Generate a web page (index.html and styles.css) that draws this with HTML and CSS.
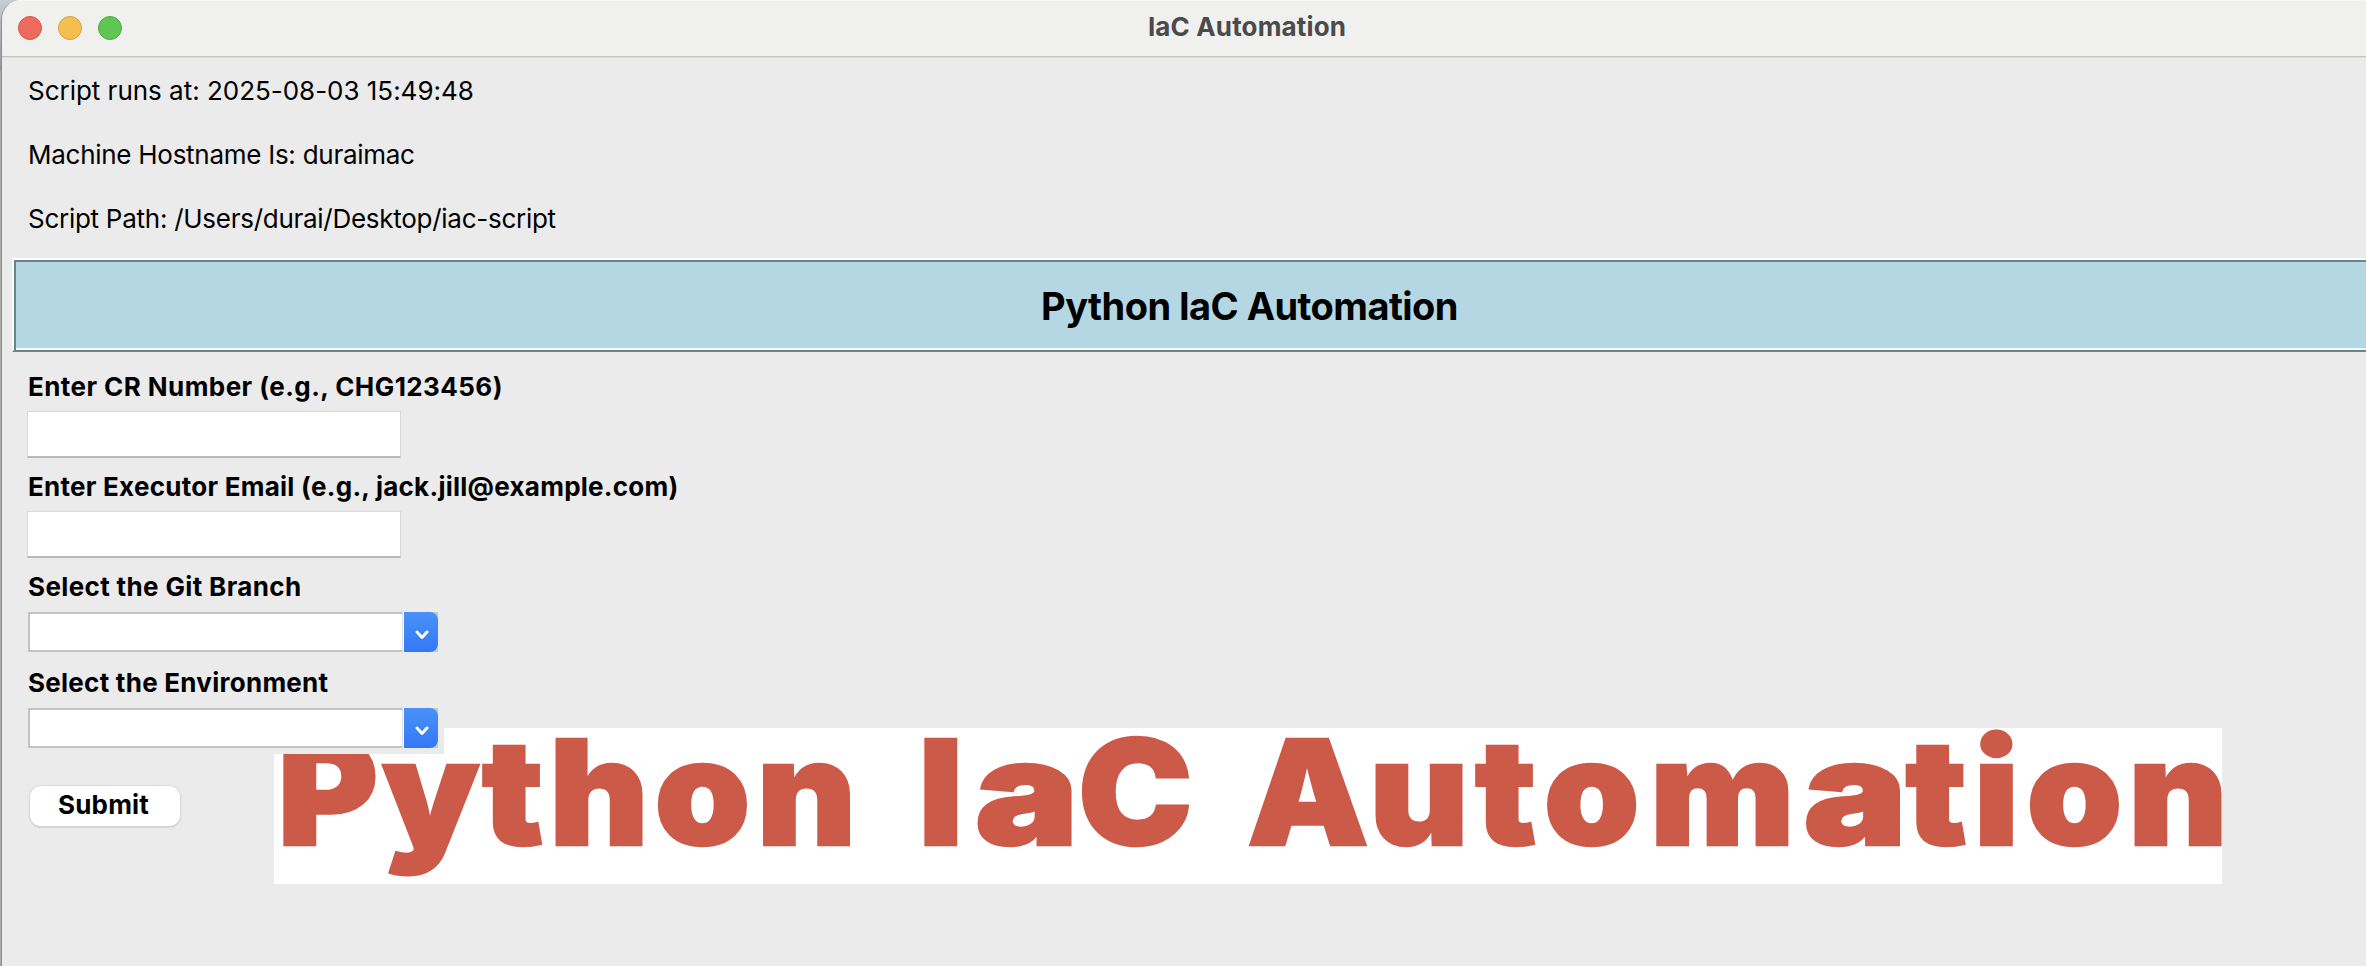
FILE: index.html
```
<!DOCTYPE html>
<html lang="en">
<head>
<meta charset="utf-8">
<title>IaC Automation</title>
<link rel="stylesheet" href="styles.css">
</head>
<body>
<div class="window">
  <header class="titlebar">
    <div class="lights">
      <span class="light close"></span>
      <span class="light minimize"></span>
      <span class="light zoom"></span>
    </div>
    <h1 class="window-title">IaC Automation</h1>
  </header>
  <main class="content">
    <div class="info">
      <p class="info-line first">Script runs at: 2025-08-03 15:49:48</p>
      <p class="info-line">Machine Hostname Is: duraimac</p>
      <p class="info-line">Script Path: /Users/durai/Desktop/iac-script</p>
    </div>
    <div class="banner"><h2 class="banner-title">Python IaC Automation</h2></div>
    <svg class="picture" viewBox="0 0 1948 156" role="img" aria-label="Python IaC Automation">
      <g class="picture-text" transform="scale(1.05 1)">
        <text y="117" x="3.3 102.9 198.1 262.1 362.4 459.7">Python</text>
        <text y="117" x="613.8">I<tspan x="667.3" textLength="99" lengthAdjust="spacingAndGlyphs">a</tspan><tspan x="765.7">C</tspan></text>
        <text y="117" x="926.6 1043.1 1143.8 1209.3 1310.5">Autom<tspan x="1456.4" textLength="99" lengthAdjust="spacingAndGlyphs">a</tspan><tspan x="1553.8 1618.8 1669.1 1765.9">tion</tspan></text>
      </g>
    </svg>
    <form class="form">
      <div class="field">
        <label class="label cr" for="cr">Enter CR Number (e.g., CHG123456)</label>
        <input class="entry" id="cr" type="text">
      </div>
      <div class="field">
        <label class="label email" for="email">Enter Executor Email (e.g., jack.jill@example.com)</label>
        <input class="entry" id="email" type="text">
      </div>
      <div class="field choice">
        <span class="label branch">Select the Git Branch</span>
        <div class="combo">
          <div class="combo-value"></div>
          <div class="combo-end"><div class="combo-arrow"><svg class="chevron" viewBox="0 0 16 12"><path d="M3 3 8 8.5 13 3"/></svg></div></div>
        </div>
      </div>
      <div class="field choice last">
        <span class="label env">Select the Environment</span>
        <div class="combo">
          <div class="combo-value"></div>
          <div class="combo-end"><div class="combo-arrow"><svg class="chevron" viewBox="0 0 16 12"><path d="M3 3 8 8.5 13 3"/></svg></div></div>
        </div>
      </div>
      <button class="submit" type="button">Submit</button>
    </form>
  </main>
</div>
</body>
</html>
```
FILE: styles.css
```
* { box-sizing: border-box; }
body {
  margin: 0;
  height: 966px;
  overflow: hidden;
  padding-left: 1px;
  background: linear-gradient(#c9cdd2 0, #8f959b 70px, #a9a9a9 72px, #a9a9a9 100%);
  font-family: Inter, "Liberation Sans", sans-serif;
  font-size: 26px;
  color: #000;
}
h1, h2, p { margin: 0; font-size: inherit; }
.window {
  position: relative;
  height: 966px;
  overflow: hidden;
  border-left: 1px solid #8e8e8e;
  border-top-left-radius: 20px;
  background: #ebebeb;
}
.titlebar {
  display: grid;
  grid-template-columns: 300px 1fr 188px;
  align-items: center;
  height: 58px;
  padding: 0 0 2px 16px;
  background: #f0f0ee;
  border-top: 1px solid #f8f8f7;
  border-bottom: 1px solid #dedede;
  box-shadow: inset 0 -1px #c2c2c2;
}
.lights { display: flex; gap: 16px; }
.light { width: 24px; height: 24px; border-radius: 50%; border: 1px solid; }
.close { background: #ec6a5e; border-color: #d6564b; }
.minimize { background: #f4bf4f; border-color: #d8a040; }
.zoom { background: #61c554; border-color: #51a73e; }
.window-title {
  padding-right: 2px;
  text-align: center;
  line-height: 52px;
  padding-bottom: 2px;
  font-weight: 700;
  letter-spacing: .15px;
  color: #4a4a4a;
}
.info { padding: 1px 0 0 26px; }
.info-line { line-height: 64px; letter-spacing: -.27px; }
.first { letter-spacing: -.02px; }
.banner {
  height: 94px;
  margin: 7px 0 0 10px;
  padding-top: 3px;
  background: #b5d7e3;
  border-left: 2px solid #f8ffff;
  border-top: 2px solid #f8ffff;
  border-bottom: 2px solid #6c838b;
  box-shadow: inset 2px 2px #6c838b, inset 0 -2px #f8ffff;
}
.banner-title {
  width: 2471px;
  text-align: center;
  font-size: 38px;
  line-height: 86px;
  font-weight: 700;
  letter-spacing: -.55px;
}
.picture {
  position: absolute;
  left: 272px;
  top: 728px;
  width: 1948px;
  height: 156px;
  overflow: visible;
  background: #fff;
}
.picture-text {
  font: 900 146px Inter, "Liberation Sans", sans-serif;
  fill: #cc5a49;
  stroke: #cc5a49;
  stroke-width: 2.5px;
}
.form { position: relative; padding-top: 14px; width: 900px; }
.field { width: 442px; padding: 0 0 8px 25px; white-space: nowrap; }
.label { display: block; padding: 2px 0 0 1px; line-height: 38px; font-weight: 700; }
.cr { letter-spacing: .43px; }
.email { letter-spacing: .26px; }
.branch { letter-spacing: .36px; }
.env { letter-spacing: .26px; }
.entry {
  display: block;
  width: 374px;
  height: 47px;
  margin-top: 5px;
  padding: 0 8px;
  border: 1px solid #d9d9d9;
  border-bottom: 2px solid #b9b9b9;
  border-radius: 0;
  background: #fff;
  font: inherit;
  outline: none;
}
.choice { padding-left: 26px; padding-bottom: 10px; }
.choice .label { padding-left: 0; }
.last { padding-bottom: 6px; background: #ebebeb; }
.combo { display: flex; width: 410px; height: 40px; margin-top: 6px; }
.combo-value { flex: 1; background: #fff; border: 2px solid #c3c3c3; border-right: 1px solid #e0e0e0; }
.combo-end { width: 35px; background: #c9c9c9; border-left: 1px solid #fff; }
.combo-arrow {
  display: flex;
  align-items: center;
  justify-content: center;
  height: 40px;
  padding: 5px 0 0 2px;
  border-radius: 0 8px 8px 0;
  background: linear-gradient(#4b91f8, #3378f6);
}
.chevron { width: 16px; height: 12px; fill: none; stroke: #fff; stroke-width: 3px; stroke-linecap: round; stroke-linejoin: round; }
.submit {
  display: block;
  width: 150px;
  height: 40px;
  margin: 32px 0 0 28px;
  padding: 0 3px 2px 0;
  border: 0;
  border-radius: 11px;
  background: #fff;
  box-shadow: 0 0 1px 1px #d9d9d9, 0 1px 2px #a8a8a8;
  font: 700 26px/36px Inter, "Liberation Sans", sans-serif;
  letter-spacing: .2px;
  color: #000;
}
```
